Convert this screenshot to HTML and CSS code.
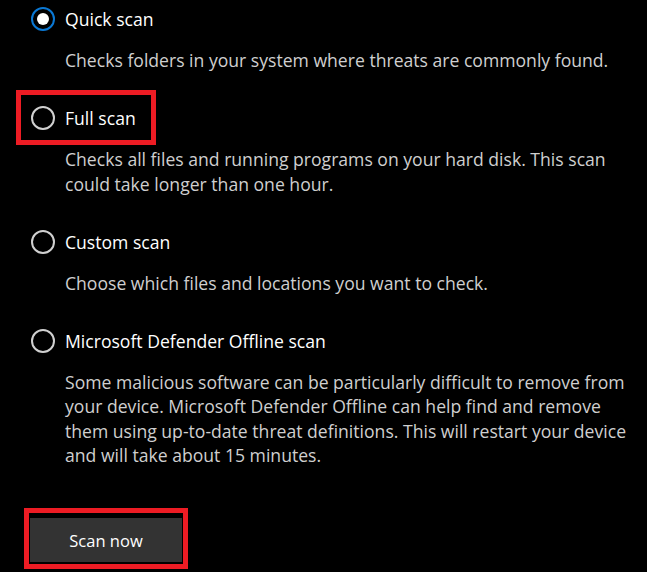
FILE: index.html
```html
<!DOCTYPE html>
<html lang="en">

<head>
    <meta charset="UTF-8">
    <meta name="viewport" content="width=device-width, initial-scale=1.0">
    <title>Scan options</title>
    <link rel="stylesheet" href="styles.css">
</head>

<body>
    <div class="scan-options">
        <div class="option">
            <label class="option-row">
                <span class="radio checked"></span>
                <span class="option-title">Quick scan</span>
            </label>
            <p class="option-desc">Checks folders in your system where threats are commonly found.</p>
        </div>

        <div class="option">
            <label class="option-row marked">
                <span class="radio"></span>
                <span class="option-title">Full scan</span>
            </label>
            <p class="option-desc">Checks all files and running programs on your hard disk. This scan could take longer than one hour.</p>
        </div>

        <div class="option">
            <label class="option-row">
                <span class="radio"></span>
                <span class="option-title">Custom scan</span>
            </label>
            <p class="option-desc">Choose which files and locations you want to check.</p>
        </div>

        <div class="option">
            <label class="option-row">
                <span class="radio"></span>
                <span class="option-title">Microsoft Defender Offline scan</span>
            </label>
            <p class="option-desc">Some malicious software can be particularly difficult to remove from your device. Microsoft Defender Offline can help find and remove them using up-to-date threat definitions. This will restart your device and will take about 15 minutes.</p>
        </div>

        <div class="scan-box">
            <button class="scan-button">Scan now</button>
        </div>
    </div>
</body>

</html>
```
FILE: styles.css
```css
body {
    margin: 0;
    background-color: #000;
    font-family: "Open Sans", "Noto Sans", sans-serif;
    color: #fff;
}

.scan-options {
    padding: 7px 0 0 31px;
}

.option {
    margin-bottom: 34px;
}

.option-row {
    display: flex;
    width: fit-content;
    align-items: center;
    gap: 10px;
    height: 24px;
}

/* red annotation frame around the full scan row */
.option-row.marked {
    border: 5px solid #ed1c24;
    padding: 11px 15px 10px 10px;
    margin: -16px 0 -15px -15px;
}

.radio {
    width: 24px;
    height: 24px;
    box-sizing: border-box;
    border: 2px solid #d0d0d0;
    border-radius: 50%;
    display: flex;
    align-items: center;
    justify-content: center;
}

.radio.checked {
    border-color: #0a78d4;
}

.radio.checked::after {
    content: "";
    width: 12px;
    height: 12px;
    border-radius: 50%;
    background-color: #fff;
}

.option-title {
    font-size: 17.6px;
    color: #fff;
}

.option-desc {
    margin: 17px 0 0 34px;
    font-size: 17.6px;
    line-height: 24.3px;
    color: #cfcfcf;
    max-width: 575px;
}

.scan-box {
    width: fit-content;
    margin: 41px 0 0 -7px;
    border: 5px solid #ed1c24;
    padding: 5px 1px 2px 1px;
}

.scan-button {
    display: block;
    width: 152px;
    height: 44px;
    border: none;
    background-color: #333;
    color: #fff;
    font-family: "Open Sans", "Noto Sans", sans-serif;
    font-size: 16.5px;
    padding: 0;
}
```
